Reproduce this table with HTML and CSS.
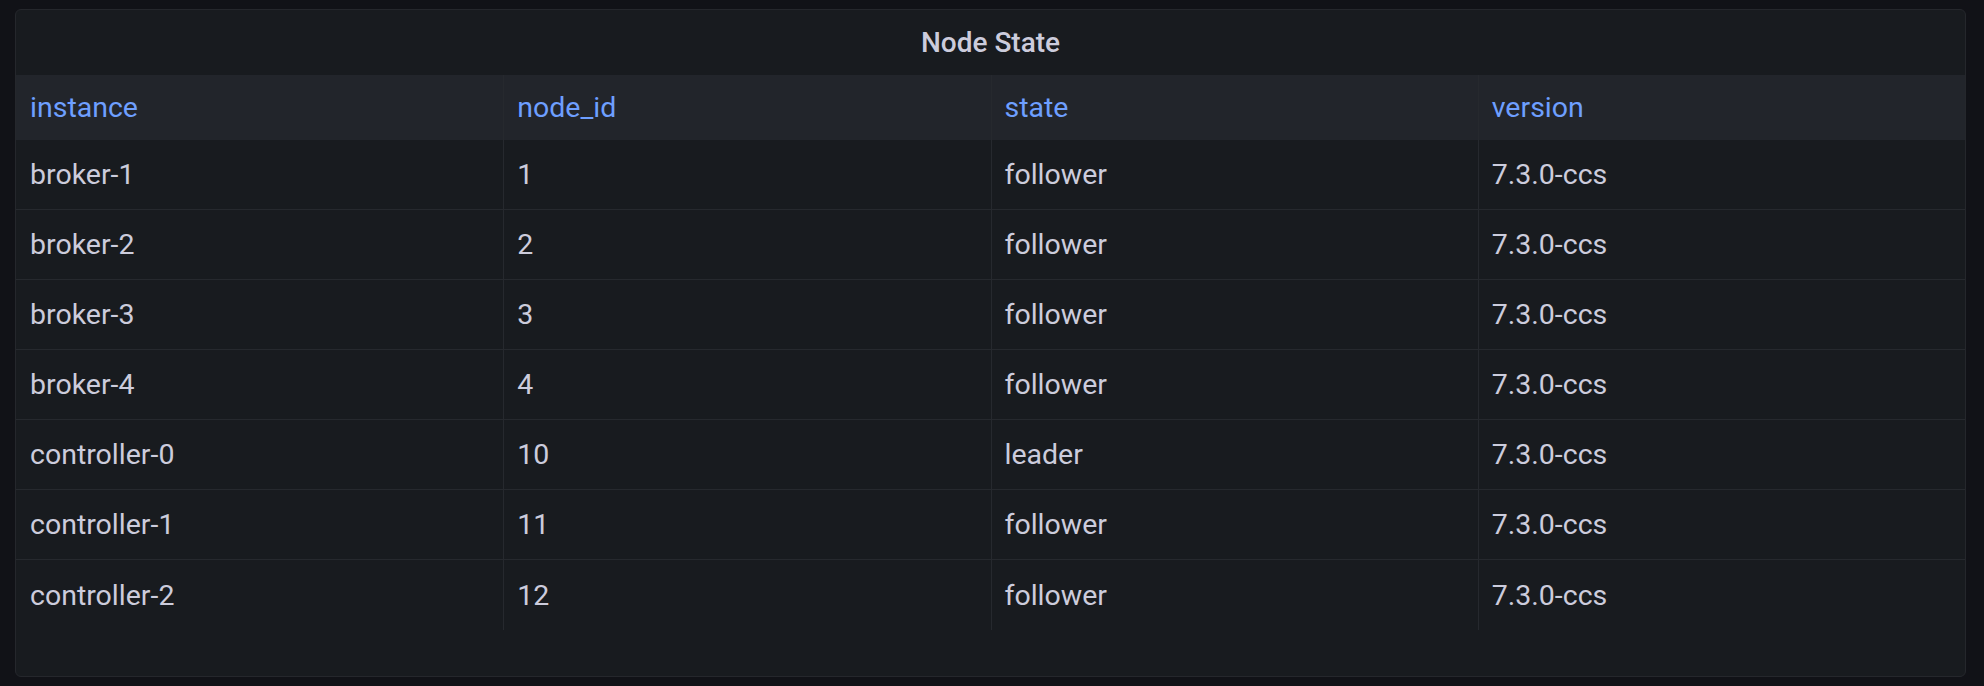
FILE: index.html
```html
<!DOCTYPE html>
<html lang="en">
<head>
<meta charset="utf-8">
<title>Node State</title>
<link rel="stylesheet" href="styles.css">
</head>
<body>
<div class="panel">
  <div class="panel-title">Node State</div>
  <div class="table">
    <div class="row head">
      <div class="cell">instance</div>
      <div class="cell">node_id</div>
      <div class="cell">state</div>
      <div class="cell">version</div>
    </div>
    <div class="row">
      <div class="cell">broker-1</div><div class="cell">1</div><div class="cell">follower</div><div class="cell">7.3.0-ccs</div>
    </div>
    <div class="row">
      <div class="cell">broker-2</div><div class="cell">2</div><div class="cell">follower</div><div class="cell">7.3.0-ccs</div>
    </div>
    <div class="row">
      <div class="cell">broker-3</div><div class="cell">3</div><div class="cell">follower</div><div class="cell">7.3.0-ccs</div>
    </div>
    <div class="row">
      <div class="cell">broker-4</div><div class="cell">4</div><div class="cell">follower</div><div class="cell">7.3.0-ccs</div>
    </div>
    <div class="row">
      <div class="cell">controller-0</div><div class="cell">10</div><div class="cell">leader</div><div class="cell">7.3.0-ccs</div>
    </div>
    <div class="row">
      <div class="cell">controller-1</div><div class="cell">11</div><div class="cell">follower</div><div class="cell">7.3.0-ccs</div>
    </div>
    <div class="row last">
      <div class="cell">controller-2</div><div class="cell">12</div><div class="cell">follower</div><div class="cell">7.3.0-ccs</div>
    </div>
  </div>
</div>
</body>
</html>
```
FILE: styles.css
```css
html, body {
  margin: 0;
  height: 100%;
}
body {
  background: #111217;
  padding: 9px 18px 0 15px;
  box-sizing: border-box;
  font-family: Roboto, "Liberation Sans", sans-serif;
  color: #ccccdc;
}
.panel {
  height: 668px;
  box-sizing: border-box;
  background: #181b1f;
  border: 1px solid #25272c;
  border-radius: 6px;
  overflow: hidden;
  display: flex;
  flex-direction: column;
}
.panel-title {
  height: 65px;
  flex: 0 0 65px;
  display: flex;
  align-items: center;
  justify-content: center;
  font-size: 28px;
  font-weight: 500;
  color: #ccccdc;
}
.table {
  display: flex;
  flex-direction: column;
}
.row {
  display: grid;
  grid-template-columns: repeat(4, 1fr);
  height: 70px;
  box-sizing: border-box;
  border-bottom: 1px solid #26292e;
}
.row.head {
  height: 65px;
  background: #22252b;
  border-bottom: none;
}
.row.last {
  border-bottom: none;
}
.cell {
  display: flex;
  align-items: center;
  padding: 0 12px 0 14px;
  font-size: 28.5px;
  white-space: nowrap;
}
.cell + .cell {
  border-left: 1px solid #26292e;
  padding-left: 13px;
}
.head .cell {
  color: #6e9fff;
}
```
